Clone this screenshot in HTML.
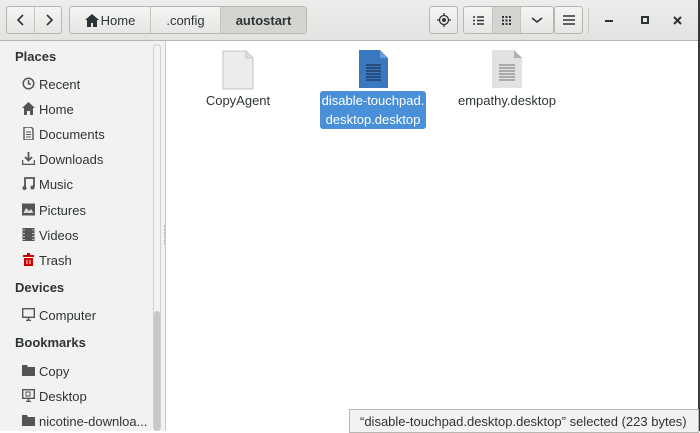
<!DOCTYPE html>
<html><head><style>
*{margin:0;padding:0;box-sizing:border-box}
body{width:700px;height:431px;overflow:hidden;font-family:"Liberation Sans","DejaVu Sans",sans-serif;font-size:13px;color:#2e3436;background:#fff;position:relative}
.hdr{position:absolute;left:0;top:0;width:700px;height:41px;background:linear-gradient(#ededec,#e2e2e0);border-bottom:1px solid #b6b6b3}
.btn{position:absolute;top:6px;height:28px;border:1px solid #b6b6b3;background:linear-gradient(#f4f4f3,#e6e6e4);border-radius:3px}
.seg{position:absolute;top:0;height:26px;border-right:1px solid #c4c4c1;display:flex;align-items:center;justify-content:center}
.side{position:absolute;left:0;top:41px;width:166px;height:390px;background:#f2f2f2;border-right:1px solid #c8c8c5}
.h{position:absolute;left:15px;font-weight:bold;font-size:13px;color:#2e3436}
.it{position:absolute;left:39px;font-size:13px;color:#2e3436}
.ic{position:absolute;left:22px;width:13px;height:13px}
.f{position:absolute;text-align:center;font-size:13px}
</style></head><body>
<div class="hdr">
 <div class="btn" style="left:6px;width:56px">
  <div class="seg" style="left:0;width:28px"><svg width="10" height="12"><path d="M7 1L2 6L7 11" stroke="#2e3436" stroke-width="1.6" fill="none"/></svg></div>
  <div class="seg" style="left:28px;width:27px;border:none"><svg width="10" height="12"><path d="M3 1L8 6L3 11" stroke="#2e3436" stroke-width="1.6" fill="none"/></svg></div>
 </div>
 <div class="btn" style="left:69px;width:238px">
  <div class="seg" style="left:0;width:81px"><svg width="14" height="13" style="margin-right:2px"><path d="M7 0L0 6H2V13H6V9H8V13H12V6H14Z" fill="#2e3436"/></svg>Home</div>
  <div class="seg" style="left:81px;width:70px">.config</div>
  <div class="seg" style="left:151px;width:85px;border:none;background:#d4d4d1;font-weight:bold">autostart</div>
 </div>
 <div class="btn" style="left:429px;width:29px;display:flex;align-items:center;justify-content:center"><svg width="14" height="14"><circle cx="7" cy="7" r="4.5" stroke="#2e3436" stroke-width="1.3" fill="none"/><circle cx="7" cy="7" r="2" fill="#2e3436"/><path d="M7 0V3M7 11V14M0 7H3M11 7H14" stroke="#2e3436" stroke-width="1.3"/></svg></div>
 <div class="btn" style="left:463px;width:91px">
  <div class="seg" style="left:0;width:29px"><svg width="11" height="9"><path d="M0 1H2M4 1H11M0 4.5H2M4 4.5H11M0 8H2M4 8H11" stroke="#2e3436" stroke-width="1.5"/></svg></div>
  <div class="seg" style="left:29px;width:28px;background:#d4d4d1"><svg width="9" height="9" fill="#2e3436"><rect x="0" y="0" width="2" height="2"/><rect x="3.5" y="0" width="2" height="2"/><rect x="7" y="0" width="2" height="2"/><rect x="0" y="3.5" width="2" height="2"/><rect x="3.5" y="3.5" width="2" height="2"/><rect x="7" y="3.5" width="2" height="2"/><rect x="0" y="7" width="2" height="2"/><rect x="3.5" y="7" width="2" height="2"/><rect x="7" y="7" width="2" height="2"/></svg></div>
  <div class="seg" style="left:57px;width:32px;border:none"><svg width="12" height="7"><path d="M1 1L6 5L11 1" stroke="#2e3436" stroke-width="1.6" fill="none"/></svg></div>
 </div>
 <div class="btn" style="left:554px;width:29px;display:flex;align-items:center;justify-content:center"><svg width="12" height="10"><path d="M0 1H12M0 5H12M0 9H12" stroke="#2e3436" stroke-width="1.6"/></svg></div>
 <div style="position:absolute;left:588px;top:8px;width:1px;height:26px;background:#c8c8c5"></div>
 <div style="position:absolute;left:605px;top:20px;width:8px;height:2px;background:#2e3436"></div>
 <div style="position:absolute;left:641px;top:16px;width:8px;height:8px;border:2px solid #2e3436"></div>
 <svg style="position:absolute;left:673px;top:16px" width="9" height="9"><path d="M1 1L8 8M8 1L1 8" stroke="#2e3436" stroke-width="2"/></svg>
</div>
<div style="position:absolute;left:698px;top:0;width:2px;height:431px;background:#3a3a3a"></div>
<div class="side">
 <div style="position:absolute;left:153px;top:3px;width:8px;height:387px;border:1px solid #d0d0cd;border-radius:4px;background:#f2f2f2"></div>
 <div style="position:absolute;left:154px;top:270px;width:6px;height:120px;border-radius:3px;background:#c8c8c6"></div>
</div>
<div class="h" style="top:49px">Places</div>
<svg class="ic" style="top:77px" viewBox="0 0 13 13"><circle cx="6.5" cy="6.5" r="5.3" stroke="#555" stroke-width="1.5" fill="none"/><path d="M6.5 3V7H9" stroke="#555" stroke-width="1.4" fill="none"/></svg><div class="it" style="top:77px">Recent</div>
<svg class="ic" style="top:102px" viewBox="0 0 13 13"><path d="M6.5 0L0 6H2V13H5V9H8V13H11V6H13Z" fill="#555"/></svg><div class="it" style="top:102px">Home</div>
<svg class="ic" style="top:127px" viewBox="0 0 13 13"><path d="M2 0H9L11 2V13H2Z" fill="none" stroke="#555" stroke-width="1.4"/><path d="M4 5H9M4 7.5H9M4 10H9" stroke="#555"/></svg><div class="it" style="top:127px">Documents</div>
<svg class="ic" style="top:152px" viewBox="0 0 13 13"><path d="M6.5 0V8M3 5L6.5 8.5L10 5" stroke="#555" stroke-width="1.8" fill="none"/><path d="M0.5 8V12.5H12.5V8" stroke="#555" stroke-width="1.5" fill="none"/></svg><div class="it" style="top:152px">Downloads</div>
<svg class="ic" style="top:177px" viewBox="0 0 13 13"><path d="M3 11V1H12V10" stroke="#555" stroke-width="1.8" fill="none"/><circle cx="2.5" cy="11" r="2" fill="#555"/><circle cx="10.5" cy="10.5" r="2" fill="#555"/></svg><div class="it" style="top:177px">Music</div>
<svg class="ic" style="top:203px" viewBox="0 0 13 13"><rect x="0" y="0.5" width="13" height="12" fill="#555"/><path d="M1.5 10L4 5L7 8L9 6L11.5 10Z" fill="#ddd"/></svg><div class="it" style="top:203px">Pictures</div>
<svg class="ic" style="top:228px" viewBox="0 0 13 13"><rect x="0.5" y="0" width="12" height="13" fill="#555"/><path d="M2 1.5V2.5M2 5V6M2 8V9M2 11V12M11 1.5V2.5M11 5V6M11 8V9M11 11V12" stroke="#eee" stroke-width="1.3"/></svg><div class="it" style="top:228px">Videos</div>
<svg class="ic" style="top:253px" viewBox="0 0 13 13"><rect x="1" y="2" width="11" height="2" fill="#c00"/><rect x="5" y="0" width="3" height="2" fill="#c00"/><path d="M2 5H11V13H2Z" fill="#c00"/><path d="M5 7V11M8 7V11" stroke="#fff"/></svg><div class="it" style="top:253px">Trash</div>
<div class="h" style="top:280px">Devices</div>
<svg class="ic" style="top:308px" viewBox="0 0 13 13"><rect x="0.7" y="0.7" width="11.6" height="8.6" fill="none" stroke="#555" stroke-width="1.4"/><path d="M4 12.5H9M6.5 10V12" stroke="#555" stroke-width="1.6"/></svg><div class="it" style="top:308px">Computer</div>
<div class="h" style="top:335px">Bookmarks</div>
<svg class="ic" style="top:364px" viewBox="0 0 13 13"><path d="M0 1H5L6 3H13V12H0Z" fill="#555"/></svg><div class="it" style="top:364px">Copy</div>
<svg class="ic" style="top:389px" viewBox="0 0 13 13"><rect x="0.7" y="0.7" width="11.6" height="8.6" fill="none" stroke="#555" stroke-width="1.4"/><rect x="4" y="3" width="4" height="4" fill="none" stroke="#555"/><path d="M4 12.5H9M6.5 10V12" stroke="#555" stroke-width="1.6"/></svg><div class="it" style="top:389px">Desktop</div>
<svg class="ic" style="top:414px" viewBox="0 0 13 13"><path d="M0 1H5L6 3H13V12H0Z" fill="#555"/></svg><div class="it" style="top:414px">nicotine-downloa...</div>
<div style="position:absolute;left:164px;top:225px;width:2px;height:20px;border-left:1px dotted #aaa"></div>

<svg style="position:absolute;left:222px;top:50px" width="32" height="40"><path d="M1 1H24L31 8V39H1Z" fill="#ececea" stroke="#c4c4c2"/><path d="M24 1V8H31" fill="#dcdcda" stroke="#c4c4c2"/></svg>
<div class="f" style="left:190px;top:93px;width:96px">CopyAgent</div>
<svg style="position:absolute;left:357px;top:49px" width="32" height="40"><path d="M2 1H23L31 9V39H2Z" fill="#3a78c0"/><path d="M23 1V9H31Z" fill="#6a9dd8"/><path d="M9 16H24M9 19H24M9 22H24M9 25H24M9 28H24M9 31H24" stroke="#1e3f6a" stroke-width="1.5"/></svg>
<div style="position:absolute;left:320px;top:91px;width:106px;height:38px;background:#4a90d9;border-radius:3px;color:#fff;text-align:center;line-height:19px;font-size:13px">disable-touchpad.<br>desktop.desktop</div>
<svg style="position:absolute;left:491px;top:49px" width="32" height="40"><path d="M1 1H23L31 9V39H1Z" fill="#e2e2e0"/><path d="M23 1V9H31Z" fill="#b0b0ae"/><path d="M8 16H24M8 19H24M8 22H24M8 25H24M8 28H24M8 31H24" stroke="#888" stroke-width="1.3"/></svg>
<div class="f" style="left:447px;top:93px;width:120px">empathy.desktop</div>
<div style="position:absolute;left:349px;top:409px;width:350px;height:24px;background:#f2f2f2;border:1px solid #b6b6b3;font-size:13px;padding:4px 0 0 10px">“disable-touchpad.desktop.desktop” selected  (223 bytes)</div>
</body></html>
